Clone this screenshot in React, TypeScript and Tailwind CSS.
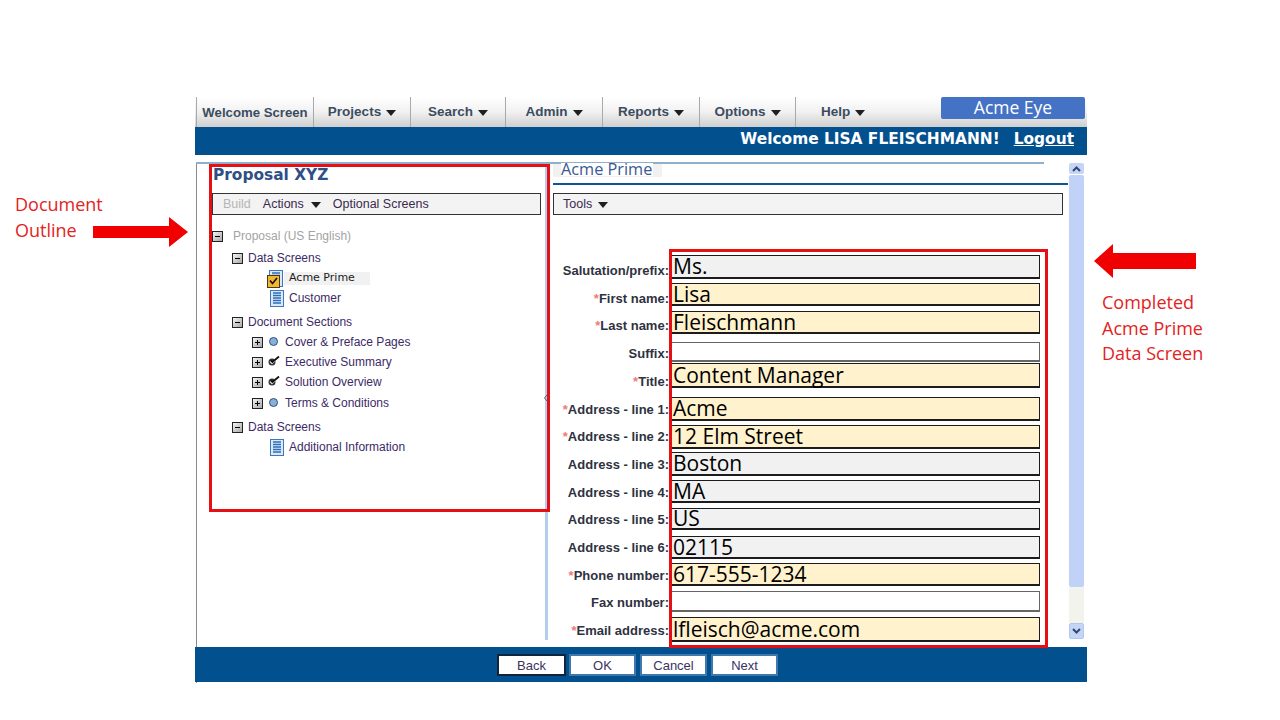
const navItems = [
  { label: "Projects", width: "w-[97px]" },
  { label: "Search", width: "w-[95px]" },
  { label: "Admin", width: "w-[97px]" },
  { label: "Reports", width: "w-[97px]" },
  { label: "Options", width: "w-[96px]" },
];

const formLabels = [
  { text: "Salutation/prefix:" },
  { text: "First name:", req: true },
  { text: "Last name:", req: true },
  { text: "Suffix:" },
  { text: "Title:", req: true },
  { text: "Address - line 1:", req: true },
  { text: "Address - line 2:", req: true },
  { text: "Address - line 3:" },
  { text: "Address - line 4:" },
  { text: "Address - line 5:" },
  { text: "Address - line 6:" },
  { text: "Phone number:", req: true },
  { text: "Fax number:" },
  { text: "Email address:", req: true },
];

const formFields = [
  { value: "Ms.", cls: "h-[24px] border-[#1c1c1c] bg-[#f1f1f1]" },
  { value: "Lisa", cls: "mt-[4px] h-[23px] border-[#1c1c1c] bg-[#fff2cc]" },
  { value: "Fleischmann", cls: "mt-[5px] h-[23px] border-[#1c1c1c] bg-[#fff2cc]" },
  { value: "", cls: "mt-[8px] h-[20px] border-[#666] bg-white" },
  { value: "Content Manager", cls: "mt-px h-[25px] border-[#1c1c1c] bg-[#fff2cc]" },
  { value: "Acme", cls: "mt-[9px] h-[24px] border-[#1c1c1c] bg-[#fff2cc]" },
  { value: "12 Elm Street", cls: "mt-[4px] h-[24px] border-[#1c1c1c] bg-[#fff2cc]" },
  { value: "Boston", cls: "mt-[3px] h-[24px] border-[#1c1c1c] bg-[#f1f1f1]" },
  { value: "MA", cls: "mt-[4px] h-[23px] border-[#1c1c1c] bg-[#f1f1f1]" },
  { value: "US", cls: "mt-[5px] h-[22px] border-[#1c1c1c] bg-[#f1f1f1]" },
  { value: "02115", cls: "mt-[6px] h-[23px] border-[#1c1c1c] bg-[#f1f1f1]" },
  { value: "617-555-1234", cls: "mt-[4px] h-[23px] border-[#1c1c1c] bg-[#fff2cc]" },
  { value: "", cls: "mt-[5px] h-[21px] border-[#666] bg-white" },
  { value: "lfleisch@acme.com", cls: "mt-[5px] h-[25px] border-[#1c1c1c] bg-[#fff2cc]" },
];

const Caret = ({ className = "" }: { className?: string }) => (
  <svg width="10" height="6" viewBox="0 0 10 6" className={className}>
    <path d="M0 0h10L5 6z" fill="#1f1f1f" />
  </svg>
);

const TreeBox = ({ open }: { open?: boolean }) => (
  <span className="relative block h-[11px] w-[11px] shrink-0 border border-[#222] bg-gradient-to-br from-[#f5f5f5] to-[#a8a8a8]">
    <span className="absolute left-[2px] top-[4px] h-px w-[5px] bg-black" />
    {!open && <span className="absolute left-[4px] top-[2px] h-[5px] w-px bg-black" />}
  </span>
);

const DocIcon = () => (
  <svg width="14" height="17" viewBox="0 0 14 17" className="shrink-0">
    <rect x="0.5" y="0.5" width="13" height="16" fill="#dbe8f8" stroke="#3b78c4" />
    <path d="M3 3h8M3 5.5h8M3 8h8M3 10.5h8M3 13h8" stroke="#2f6cb8" strokeWidth="1.3" />
  </svg>
);

const CheckBullet = () => (
  <svg width="12" height="10" viewBox="0 0 12 10" className="shrink-0">
    <circle cx="4" cy="6" r="3.5" fill="#333" />
    <path d="M2 5.5l2 2L11 1" fill="none" stroke="#fff" strokeWidth="1.2" />
    <path d="M3 4.5l1.5 1.5L11 0.5" fill="none" stroke="#111" strokeWidth="1.8" />
  </svg>
);

const DotBullet = () => (
  <span className="block h-[9px] w-[9px] shrink-0 rounded-full border border-[#2d4f77] bg-[#86afd9]" />
);

const SectionRow = ({ text, check, cls }: { text: string; check?: boolean; cls: string }) => (
  <div className={`flex h-[20px] items-center pl-[55px] ${cls}`}>
    <TreeBox />
    <span className="-mt-[2px] ml-[5px] flex w-[11px] justify-center">{check ? <CheckBullet /> : <DotBullet />}</span>
    <span className="ml-[6px]">{text}</span>
  </div>
);

const Toolbar = ({ children }: { children: React.ReactNode }) => (
  <div className="flex h-[22px] items-center border border-[#333] bg-[#f3f3f3] pt-px text-[12.5px] text-[#3a2a4e]">
    {children}
  </div>
);

const FooterButton = ({ label, active, cls }: { label: string; active?: boolean; cls: string }) => (
  <button
    className={`h-[22px] bg-white pb-[2px] text-[13px] text-[#3a3360] ${cls} ${
      active ? "border-2 border-[#10243c]" : "border-2 border-[#3f78ad]"
    }`}
  >
    {label}
  </button>
);

export default function App() {
  return (
    <div className="relative h-[720px] w-[1280px] overflow-hidden bg-white pl-[195px] pt-[97px] font-['Liberation_Sans',sans-serif]">
      <div className="w-[892px]">
        {/* Top menu */}
        <div className="flex h-[30px] bg-gradient-to-b from-white via-[#f1f1f1] to-[#cfcfcf] pl-px">
          <div className="flex w-[118px] items-center justify-center border-x border-[#a9a9a9] pt-px text-[13.2px] font-bold text-[#3c4c60]">
            Welcome Screen
          </div>
          {navItems.map((item) => (
            <div
              key={item.label}
              className={`flex items-center justify-center gap-[5px] border-r border-[#a9a9a9] pt-px text-[13.5px] font-bold text-[#3c4c60] ${item.width}`}
            >
              {item.label}
              <Caret />
            </div>
          ))}
          <div className="ml-[25px] flex items-center gap-[5px] pt-px text-[13.5px] font-bold text-[#3c4c60]">
            Help
            <Caret />
          </div>
          <div className="ml-auto mr-[2px] flex h-[22px] w-[144px] items-center justify-center rounded-[2px] bg-[#4472c4] font-['Open_Sans',sans-serif] text-[17.5px] leading-none text-white">
            Acme Eye
          </div>
        </div>

        {/* Welcome bar */}
        <div className="flex h-[28px] items-center justify-end bg-[#03508f] pb-[3px] pr-[13px] font-['DejaVu_Sans',sans-serif] text-[15.4px] font-bold text-white">
          <span>Welcome LISA FLEISCHMANN!</span>
          <span className="ml-[14px] underline">Logout</span>
        </div>

        {/* Main area */}
        <div className="ml-px mt-[7px] h-[2px] w-[848px] bg-[#8fb0cc]" />
        <div className="ml-px flex h-[476px] border-l border-[#8a8a8a]">
          {/* Document outline */}
          <div className="w-[348px] pl-[15px] pr-[4px]">
            <div className="h-[29px] pl-px pt-px font-['DejaVu_Sans',sans-serif] text-[15.4px] font-bold leading-5 text-[#2f4f86]">
              Proposal XYZ
            </div>
            <Toolbar>
              <span className="ml-[10px] text-[#b5b5b5]">Build</span>
              <span className="ml-[12px]">Actions</span>
              <Caret className="ml-[7px]" />
              <span className="ml-[12px]">Optional Screens</span>
            </Toolbar>
            <div className="-ml-[15px] text-[12px] text-[#3d2a66]">
              <div className="mt-[11px] flex h-[20px] items-center pl-[15px] text-[#a3a3a3]">
                <TreeBox open />
                <span className="ml-[10px]">Proposal (US English)</span>
              </div>
              <div className="mt-[2px] flex h-[20px] items-center pl-[35px]">
                <TreeBox open />
                <span className="ml-[5px]">Data Screens</span>
              </div>
              <div className="flex h-[20px] items-center pl-[72px]">
                <span className="relative block h-[17px] w-[14px]">
                  <DocIcon />
                  <span className="absolute -left-[2px] top-[5px] flex h-[13px] w-[13px] items-center justify-center border border-[#4a3a10] bg-[#f2b632]">
                    <svg width="9" height="8" viewBox="0 0 9 8">
                      <path d="M1 3.5l2.5 3L8 1" fill="none" stroke="#111" strokeWidth="1.6" />
                    </svg>
                  </span>
                </span>
                <span className="ml-px flex h-[13px] w-[86px] items-center bg-[#f1f1f1] pl-[5px] font-['DejaVu_Sans',sans-serif] text-[11px] text-[#1c1c1c]">
                  Acme Prime
                </span>
              </div>
              <div className="flex h-[20px] items-center pl-[73px]">
                <DocIcon />
                <span className="ml-[5px]">Customer</span>
              </div>
              <div className="mt-[4px] flex h-[20px] items-center pl-[35px]">
                <TreeBox open />
                <span className="ml-[5px]">Document Sections</span>
              </div>
              <SectionRow text="Cover & Preface Pages" cls="" />
              <SectionRow text="Executive Summary" check cls="" />
              <SectionRow text="Solution Overview" check cls="" />
              <SectionRow text="Terms & Conditions" cls="mt-px" />
              <div className="mt-[4px] flex h-[20px] items-center pl-[35px]">
                <TreeBox open />
                <span className="ml-[5px]">Data Screens</span>
              </div>
              <div className="flex h-[20px] items-center pl-[73px]">
                <DocIcon />
                <span className="ml-[5px]">Additional Information</span>
              </div>
            </div>
          </div>

          {/* Splitter */}
          <div className="relative w-[3px] bg-[#b4ccee]">
            <svg width="4" height="8" viewBox="0 0 4 8" className="absolute -left-px top-[230px]">
              <path d="M3.5 0.5L0.5 4l3 3.5" fill="none" stroke="#555" />
            </svg>
          </div>

          {/* Data screen */}
          <div className="ml-[5px] w-[515px]">
            <div className="flex h-[19px] items-start">
              <span className="flex h-[13px] w-[109px] items-center bg-[#f1f1f1] pl-[8px]">
                <span className="-mt-[2px] bg-white pr-[1px] font-['Open_Sans',sans-serif] text-[16.3px] leading-[13px] text-[#3a5a92]">
                  Acme Prime
                </span>
              </span>
            </div>
            <div className="h-[2px] bg-[#0f5590]" />
            <div className="mr-[5px] mt-[8px]">
              <Toolbar>
                <span className="ml-[9px]">Tools</span>
                <Caret className="ml-[6px]" />
              </Toolbar>
            </div>
            <div className="flex">
              <div className="mt-[42px] w-[116px] text-[13px] font-bold text-[#2e3240]">
                {formLabels.map((label) => (
                  <div key={label.text} className="flex h-[27.7px] items-center justify-end">
                    {label.req && <span className="text-[#ef7a7a]">*</span>}
                    {label.text}
                  </div>
                ))}
              </div>
              <div className="ml-[2px] mt-[40px] w-[369px] font-['Open_Sans',sans-serif] text-[21px] text-black">
                {formFields.map((field, i) => (
                  <div
                    key={i}
                    className={`flex items-center border border-b-2 pl-[1px] leading-none ${field.cls}`}
                  >
                    {field.value}
                  </div>
                ))}
              </div>
            </div>
          </div>

          {/* Scrollbar */}
          <div className="-mt-px flex w-[16px] flex-col pl-px">
            <div className="flex h-[11px] items-center justify-center rounded-[2px] bg-[#c5d5f5]">
              <svg width="9" height="6" viewBox="0 0 9 6">
                <path d="M1 5l3.5-3.5L8 5" fill="none" stroke="#32486e" strokeWidth="2" />
              </svg>
            </div>
            <div className="mt-px h-[412px] rounded-[2px] bg-[#c0d2f8]" />
            <div className="h-[36px] bg-[#f3f3ee]" />
            <div className="flex h-[16px] items-center justify-center rounded-[2px] border border-[#b2c6ee] bg-[#c5d5f5]">
              <svg width="9" height="6" viewBox="0 0 9 6">
                <path d="M1 1l3.5 3.5L8 1" fill="none" stroke="#32486e" strokeWidth="2" />
              </svg>
            </div>
          </div>
        </div>

        {/* Footer */}
        <div className="ml-px h-[7px] border-l border-[#8a8a8a]" />
        <div className="flex h-[35px] items-center bg-[#03508f] pl-[302px]">
          <FooterButton label="Back" active cls="w-[69px]" />
          <FooterButton label="OK" cls="ml-[3px] w-[67px]" />
          <FooterButton label="Cancel" cls="ml-[4px] w-[67px]" />
          <FooterButton label="Next" cls="ml-[4px] w-[67px]" />
        </div>
        <div className="ml-px h-px w-px bg-[#8a8a8a]" />
      </div>

      {/* Slide annotations */}
      <div className="absolute left-[209px] top-[164px] h-[348px] w-[341px] border-[3px] border-[#e60f14]" />
      <div className="absolute left-[669px] top-[249px] h-[399px] w-[379px] border-[3px] border-[#e60f14]" />

      <div className="absolute left-[15px] top-[191px] font-['Open_Sans',sans-serif] text-[18px] leading-[26px] text-[#e32222]">
        Document
        <br />
        Outline
      </div>
      <svg width="95" height="30" viewBox="0 0 95 30" className="absolute left-[93px] top-[217px]">
        <path d="M0 9h76V0l19 15-19 15V21H0z" fill="#f00000" />
      </svg>

      <div className="absolute left-[1102px] top-[290px] font-['Open_Sans',sans-serif] text-[18px] leading-[25.5px] text-[#e32222]">
        Completed
        <br />
        Acme Prime
        <br />
        Data Screen
      </div>
      <svg width="102" height="34" viewBox="0 0 102 34" className="absolute left-[1094px] top-[244px]">
        <path d="M102 9H19V0L0 17l19 17V25h83z" fill="#f00000" />
      </svg>
    </div>
  );
}
